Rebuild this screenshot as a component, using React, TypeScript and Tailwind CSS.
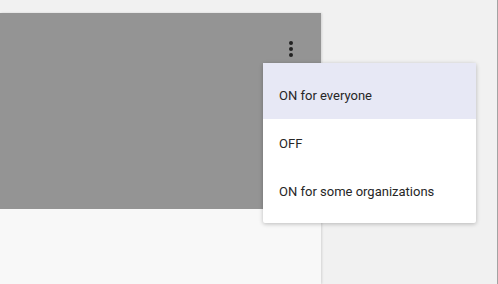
import React from "react";

export default function App() {
  return (
    <div className="relative w-[498px] h-[284px] overflow-hidden bg-[#f1f1f1] flex" style={{ fontFamily: "Roboto, 'Liberation Sans', sans-serif" }}>
      <div className="w-[321px] pt-[13px] flex flex-col">
        <div className="flex-1 flex flex-col shadow-[1px_0_2px_rgba(0,0,0,0.12)]">
          <div className="h-[196px] bg-[#949494] flex justify-end pt-[24px] pr-[18px]">
            <svg width="24" height="24" viewBox="0 0 24 24" className="block">
              <circle cx="12" cy="6" r="2" fill="#222" />
              <circle cx="12" cy="12" r="2" fill="#222" />
              <circle cx="12" cy="18" r="2" fill="#222" />
            </svg>
          </div>
          <div className="flex-1 bg-[#f8f8f8]" />
        </div>
      </div>
      <div className="flex-1" />
      <div className="w-px bg-[#a3a3a3]" />
      <div className="absolute left-[263px] top-[63px] w-[213px] bg-white rounded-[2px] shadow-[0_1px_4px_rgba(0,0,0,0.25)] pb-2 text-[13px] text-[#262626]">
        <div className="h-[56px] pt-[10px] bg-[#e7e8f5] flex items-center px-4">ON for everyone</div>
        <div className="h-[48px] pt-[2px] flex items-center px-4">OFF</div>
        <div className="h-[48px] pt-[2px] flex items-center px-4">ON for some organizations</div>
      </div>
    </div>
  );
}
